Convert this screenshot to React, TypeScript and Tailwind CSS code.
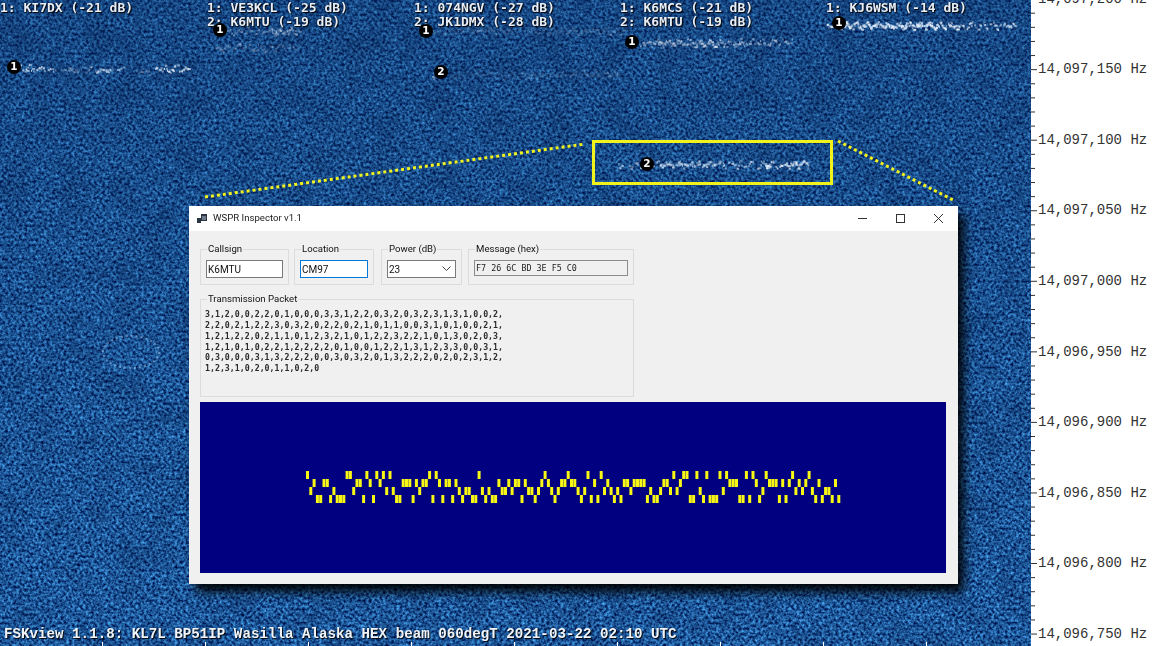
import {ReactNode} from "react";

const packet = [
  "3,1,2,0,0,2,2,0,1,0,0,0,3,3,1,2,2,0,3,2,0,3,2,3,1,3,1,0,0,2,",
  "2,2,0,2,1,2,2,3,0,3,2,0,2,2,0,2,1,0,1,1,0,0,3,1,0,1,0,0,2,1,",
  "1,2,1,2,2,0,2,1,1,0,1,2,3,2,1,0,1,2,2,3,2,2,1,0,1,3,0,2,0,3,",
  "1,2,1,0,1,0,2,2,1,2,2,2,2,0,1,0,0,1,2,2,1,3,1,2,3,3,0,0,3,1,",
  "0,3,0,0,0,3,1,3,2,2,2,0,0,3,0,3,2,0,1,3,2,2,2,0,2,0,2,3,1,2,",
  "1,2,3,1,0,2,0,1,1,0,2,0",
];
const symbols = packet.join("").split(",").map(Number);

const axisLabels = ["14,097,200", "14,097,150", "14,097,100", "14,097,050", "14,097,000", "14,096,950", "14,096,900", "14,096,850", "14,096,800", "14,096,750"];

const callLabels = [
  ["1: KI7DX (-21 dB)"],
  ["1: VE3KCL (-25 dB)", "2: K6MTU (-19 dB)"],
  ["1: 074NGV (-27 dB)", "2: JK1DMX (-28 dB)"],
  ["1: K6MCS (-21 dB)", "2: K6MTU (-19 dB)"],
  ["1: KJ6WSM (-14 dB)"],
];

// x1, x2, y, brightness of one received signal trace
const traces = [
  [20, 56, 69, 0.85], [60, 92, 70, 0.35], [95, 125, 70, 0.65], [135, 150, 71, 0.3], [155, 190, 69, 0.95],
  [222, 300, 31, 0.35], [270, 296, 32, 0.65], [215, 300, 48, 0.3], [430, 625, 31, 0.2],
  [432, 440, 77, 0.6], [450, 520, 76, 0.12], [520, 620, 75, 0.22],
  [640, 792, 43, 0.6], [655, 745, 44, 0.55], [826, 960, 26, 1], [826, 960, 26, 0.8], [880, 950, 26, 0.8], [960, 1016, 26, 0.8],
  [617, 808, 165, 0.65], [660, 725, 165, 0.75], [765, 808, 165, 0.9],
];

function makeDots() {
  let s = 12345;
  const next = () => {
    s = (s * 1664525 + 1013904223) % 4294967296;
    return s / 4294967296;
  };
  const dots: {x: number; y: number; w: number; o: number}[] = [];
  traces.forEach(([x1, x2, y, b]) => {
    for (let x = x1; x < x2; x += 1.1) {
      if (next() > 0.75) continue;
      dots.push({
        x,
        y: y + Math.sin(x * 0.6) * 2 + (next() - 0.5) * 5 - 1,
        w: 1 + next() * 2,
        o: b * (0.35 + next() * 0.65),
      });
    }
  });
  return dots;
}
const dots = makeDots();

function Waterfall() {
  return (
    <svg className="absolute inset-0 h-full w-full" viewBox="0 0 1031 646">
      <defs>
        <filter id="fine" x="0" y="0" width="100%" height="100%" colorInterpolationFilters="sRGB">
          <feTurbulence type="fractalNoise" baseFrequency="0.36" numOctaves="2" seed="7" />
          <feColorMatrix values="0.55 0 0 0 -0.155  1 0 0 0 -0.15  1.1 0 0 0 0.06  0 0 0 0 1" />
          <feGaussianBlur stdDeviation="0.3" />
        </filter>
        <filter id="mottle" x="0" y="0" width="100%" height="100%" colorInterpolationFilters="sRGB">
          <feTurbulence type="fractalNoise" baseFrequency="0.035" numOctaves="3" seed="3" />
          <feColorMatrix values="0 0 0 0 0  0 0 0 0 0.05  0 0 0 0 0.2  2.4 0 0 0 -0.95" />
        </filter>
        <filter id="soft" x="-5%" y="-50%" width="110%" height="200%">
          <feGaussianBlur stdDeviation="0.5" />
        </filter>
        <linearGradient id="shade" x1="0" y1="0" x2="0" y2="1">
          <stop offset="0" stopColor="#06224f" stopOpacity="0.3" />
          <stop offset="0.45" stopColor="#06224f" stopOpacity="0.12" />
          <stop offset="1" stopColor="#06224f" stopOpacity="0" />
        </linearGradient>
      </defs>
      <rect width="1031" height="646" fill="#1f5a9c" />
      <rect width="1031" height="646" filter="url(#fine)" />
      <rect width="1031" height="646" filter="url(#mottle)" opacity="0.2" />
      <rect width="1031" height="646" fill="url(#shade)" />
      <g filter="url(#soft)">
        {dots.map((d, i) => (
          <rect key={i} x={d.x} y={d.y} width={d.w} height="2" fill="#e8f3ff" opacity={Math.min(d.o, 1)} />
        ))}
      </g>
      <ellipse cx="131" cy="352" rx="28" ry="16" fill="none" stroke="#bcd9f5" strokeWidth="2" strokeDasharray="2 3" opacity="0.45" />
      <path d="M205 197 L585 144" stroke="#f2f21c" strokeWidth="3" strokeDasharray="3 3" />
      <path d="M838 141 L955 201" stroke="#f2f21c" strokeWidth="3" strokeDasharray="3 3" />
      {[102, 205, 308, 411, 514, 617, 720, 823, 926].map((x) => (
        <rect key={x} x={x} y="642" width="1" height="4" fill="#ffffff" />
      ))}
    </svg>
  );
}

function Badge({n, className}: {n: number; className: string}) {
  return (
    <div className={`absolute flex h-[14px] w-[14px] items-center justify-center rounded-full bg-black font-['DejaVu_Sans',sans-serif] text-[10.5px] font-bold text-white ${className}`}>
      {n}
    </div>
  );
}

function Group({label, className, children}: {label: string; className: string; children?: ReactNode}) {
  return (
    <fieldset className={`min-w-0 border border-[#dcdcdc] ${className}`}>
      <legend className="ml-[6px] px-[1px] text-[9.6px] leading-[12px] text-[#111]">{label}</legend>
      {children}
    </fieldset>
  );
}

function Dialog() {
  return (
    <div className="absolute left-[189px] top-[206px] flex h-[378px] w-[769px] flex-col bg-[#f0f0f0] font-['Roboto',sans-serif] shadow-[6px_8px_10px_rgba(0,0,0,0.95)]">
      <div className="flex h-[25px] items-center bg-white pl-[8px]">
        <svg width="11" height="10" viewBox="0 0 11 10" className="mr-[5px]">
          <rect x="0" y="4" width="4" height="5" fill="#2a3442" />
          <rect x="4" y="0" width="6" height="7" fill="#2a3442" />
          <rect x="5" y="2" width="4" height="4" fill="#6f7c8c" />
        </svg>
        <span className="text-[9.6px] text-[#222]">WSPR Inspector v1.1</span>
        <div className="ml-auto flex items-center">
          <svg width="38" height="12" viewBox="0 0 38 12"><path d="M14 5.5h9" stroke="#333" /></svg>
          <svg width="38" height="12" viewBox="0 0 38 12"><rect x="14.5" y="1.5" width="8" height="8" fill="none" stroke="#333" /></svg>
          <svg width="38" height="12" viewBox="0 0 38 12"><path d="M14 1l9 9M23 1l-9 9" stroke="#333" /></svg>
        </div>
      </div>
      <div className="flex flex-1 flex-col pl-[11px] pr-[12px] pt-[12px] pb-[11px]">
        <div className="flex h-[42px]">
          <Group label="Callsign" className="mr-[5px] w-[89px]">
            <div className="ml-[5px] mt-[5px] flex h-[18px] w-[77px] items-center border border-[#7a7a7a] bg-white pl-[1px] text-[10px] text-[#111]">K6MTU</div>
          </Group>
          <Group label="Location" className="mr-[7px] w-[80px]">
            <div className="ml-[5px] mt-[5px] flex h-[18px] w-[68px] items-center border border-[#0078d7] bg-white pl-[1px] text-[10px] text-[#111]">CM97</div>
          </Group>
          <Group label="Power (dB)" className="mr-[6px] w-[81px]">
            <div className="ml-[5px] mt-[5px] flex h-[18px] w-[69px] items-center border border-[#7a7a7a] bg-white pl-[1px] text-[10px] text-[#111]">
              23
              <svg width="9" height="6" viewBox="0 0 9 6" className="ml-auto mr-[4px]"><path d="M0.5 0.5l4 4 4-4" fill="none" stroke="#444" /></svg>
            </div>
          </Group>
          <Group label="Message (hex)" className="w-[166px]">
            <div className="ml-[5px] mt-[5px] flex h-[16px] w-[154px] items-center border border-[#8c8c8c] bg-[#f0f0f0] pl-[1px] font-['DejaVu_Sans_Mono',monospace] text-[8.4px] text-[#222] whitespace-pre">F7 26 6C BD 3E F5 C0</div>
          </Group>
        </div>
        <Group label="Transmission Packet" className="mt-[8px] h-[104px] w-[434px]">
          <div className="ml-[4px] mt-[4px] font-['DejaVu_Sans_Mono',monospace] text-[8.25px] leading-[10.85px] font-bold text-[#2a2a2a] whitespace-pre">
            {packet.map((l) => (
              <div key={l}>{l}</div>
            ))}
          </div>
        </Group>
        <div className="mt-[5px] flex-1 bg-[#000080] pl-[106px] pt-[69px]">
          <svg width="540" height="34" viewBox="0 0 540 34">
            {symbols.map((v, i) => (
              <rect key={i} x={i * 3.3} y={(3 - v) * 8} width="3" height="8" fill="#f8f814" />
            ))}
          </svg>
        </div>
      </div>
    </div>
  );
}

function AxisTicks() {
  const ticks = [];
  for (let i = -1; i < 46; i++) {
    const y = -1.4 + i * 14.11;
    ticks.push(<rect key={i} x="0" y={y} width={i % 5 === 0 ? 6 : 4} height="1" fill="#333" />);
  }
  return (
    <svg className="absolute inset-0 h-full w-full" viewBox="0 0 129 646">
      {ticks}
    </svg>
  );
}

export default function App() {
  return (
    <div className="flex h-[646px] w-[1160px] overflow-hidden bg-white">
      <div className="relative flex h-full w-[1031px] shrink-0 flex-col justify-between pb-[4px]">
        <Waterfall />
        <div className="relative grid grid-cols-[207px_207px_206px_206px_1fr] pt-[1px] font-['DejaVu_Sans_Mono',monospace] text-[13px] leading-[14px] font-bold text-[#e8eef5] whitespace-pre [text-shadow:1px_1px_1px_#000,-1px_0_1px_#06224f]">
          {callLabels.map((lines) => (
            <div key={lines[0]}>
              {lines.map((l) => (
                <div key={l}>{l}</div>
              ))}
            </div>
          ))}
        </div>
        <div className="relative pl-[4px] font-['Liberation_Mono',monospace] text-[14.2px] leading-[16px] font-bold text-[#f0f4f8] whitespace-pre [text-shadow:1px_1px_1px_#000]">
          FSKview 1.1.8: KL7L BP51IP Wasilla Alaska HEX beam 060degT 2021-03-22 02:10 UTC
        </div>
        <Badge n={1} className="left-[7px] top-[60px]" />
        <Badge n={1} className="left-[213px] top-[23px]" />
        <Badge n={1} className="left-[419px] top-[24px]" />
        <Badge n={2} className="left-[434px] top-[65px]" />
        <Badge n={1} className="left-[625px] top-[35px]" />
        <Badge n={1} className="left-[832px] top-[16px]" />
        <Badge n={2} className="left-[640px] top-[157px]" />
        <div className="absolute left-[592px] top-[140px] h-[45px] w-[241px] border-[3px] border-[#f2f21c]" />
        <Dialog />
      </div>
      <div className="relative h-full flex-1">
        <AxisTicks />
        <div className="-mt-[36px] flex flex-col font-['Liberation_Mono',monospace] text-[14px] text-[#333]">
          {axisLabels.map((l) => (
            <div key={l} className="flex h-[70.55px] items-center pl-[7px] whitespace-pre">
              {l} Hz
            </div>
          ))}
        </div>
      </div>
    </div>
  );
}
